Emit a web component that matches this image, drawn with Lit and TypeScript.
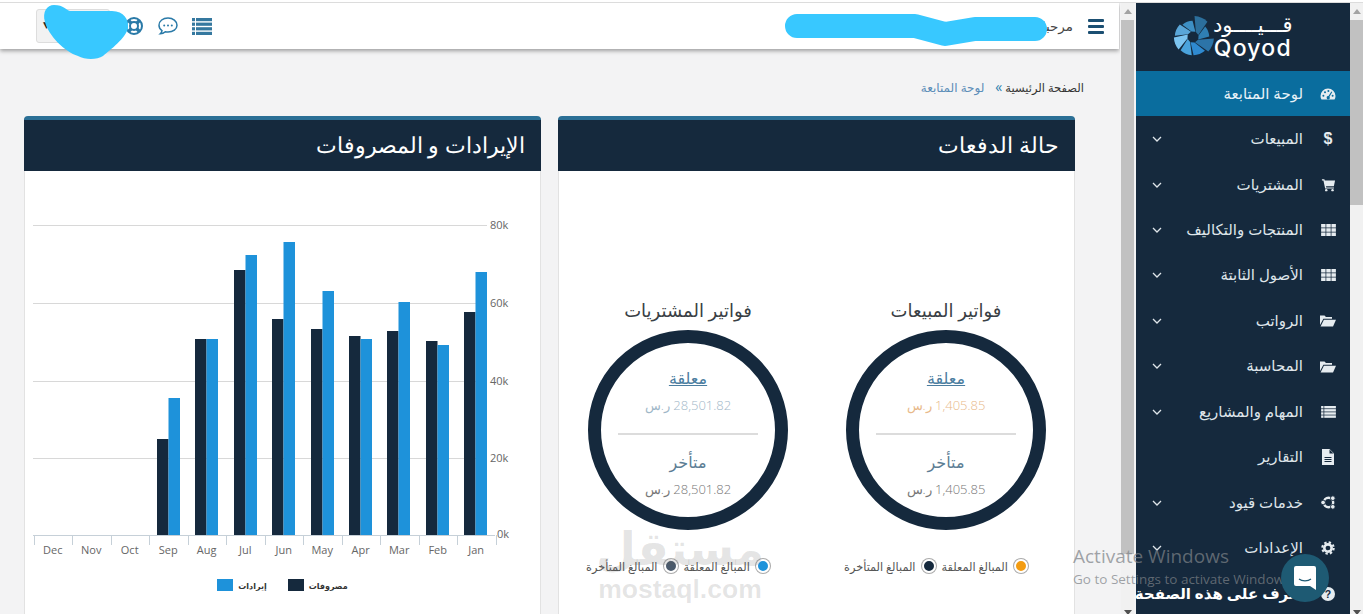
import {LitElement, html, svg, css} from 'lit';
import {customElement} from 'lit/decorators.js';

const NAV = [
  {label: 'لوحة المتابعة', icon: 'gauge', active: true},
  {label: 'المبيعات', icon: 'dollar', more: true},
  {label: 'المشتريات', icon: 'cart', more: true},
  {label: 'المنتجات والتكاليف', icon: 'grid', more: true},
  {label: 'الأصول الثابتة', icon: 'grid', more: true},
  {label: 'الرواتب', icon: 'folder', more: true},
  {label: 'المحاسبة', icon: 'folder', more: true},
  {label: 'المهام والمشاريع', icon: 'list', more: true},
  {label: 'التقارير', icon: 'file'},
  {label: 'خدمات قيود', icon: 'services', more: true},
  {label: 'الإعدادات', icon: 'cog', more: true},
  {label: 'تعرف على هذه الصفحة', icon: 'help', strong: true},
];

// x of the dark bar, top of dark bar, top of blue bar
const BARS = [
  {m: 'Dec', x: 0},
  {m: 'Nov', x: 0},
  {m: 'Oct', x: 0},
  {m: 'Sep', x: 157, d: 439, b: 398},
  {m: 'Aug', x: 195, d: 339, b: 339},
  {m: 'Jul', x: 234, d: 270, b: 255},
  {m: 'Jun', x: 272, d: 319, b: 242},
  {m: 'May', x: 311, d: 329, b: 291},
  {m: 'Apr', x: 349, d: 336, b: 339},
  {m: 'Mar', x: 387, d: 331, b: 302},
  {m: 'Feb', x: 426, d: 341, b: 345},
  {m: 'Jan', x: 464, d: 312, b: 272},
];

const GRID = [
  {y: 225, t: '80k'},
  {y: 303, t: '60k'},
  {y: 381, t: '40k'},
  {y: 458, t: '20k'},
];

const INVOICES = [
  {
    title: 'فواتير المشتريات',
    amount: '28,501.82 ر.س',
    tone: 'blue',
    dots: ['#1e92da', '#4a5a6c'],
  },
  {
    title: 'فواتير المبيعات',
    amount: '1,405.85 ر.س',
    tone: 'orange',
    dots: ['#f39c12', '#15293d'],
  },
];

// logo wheel: colour and outer radius per segment, clockwise from the top right
const WHEEL = [
  ['#2c6f9c', 22],
  ['#2f7fb4', 17],
  ['#2c74a8', 22],
  ['#2f8ad0', 19],
  ['#4aa3dc', 19],
  ['#7cc4f0', 20],
  ['#5aa6d8', 19],
  ['#3d8fc4', 17],
] as const;

function pinwheel() {
  const cx = 22;
  const cy = 22;
  return WHEEL.map(([c, r], i) => {
    const a = (i * Math.PI) / 4 - 1.5;
    const step = Math.PI / 4 - 0.1;
    const p = (rad: number, t: number) => `${(cx + rad * Math.cos(t)).toFixed(1)} ${(cy + rad * Math.sin(t)).toFixed(1)}`;
    return svg`<path d="M${p(6, a + 0.45)} L${p(r, a)} A${r} ${r} 0 0 1 ${p(r, a + step)} L${p(6, a + 0.45 + step)} Z" fill=${c}></path>`;
  });
}

function icon(name: string) {
  switch (name) {
    case 'gauge':
      return html`<svg viewBox="0 0 16 16" width="16" height="16"><path fill="#e6ecf0" d="M8 2.5a7.5 7.5 0 0 0-7.5 7.5c0 1.4.4 2.6 1 3.5h13c.6-.9 1-2.1 1-3.5A7.5 7.5 0 0 0 8 2.5z"></path><g fill="#0a6d9e"><circle cx="3.4" cy="9.8" r="1"></circle><circle cx="5" cy="6.2" r="1"></circle><circle cx="8.4" cy="4.9" r="1"></circle><circle cx="12.6" cy="9.8" r="1"></circle><path d="M11.4 5.6l.9.5-2.8 4.6a1.6 1.6 0 1 1-1-.6z"></path></g></svg>`;
    case 'dollar':
      return html`<span class="dollar">$</span>`;
    case 'cart':
      return html`<svg viewBox="0 0 16 16" width="15" height="15"><path fill="#e6ecf0" d="M1 2.5h2.6l.4 1.3h11l-1.3 6H5.3l.3 1.3h8.2v1.2H4.4L2.6 3.7H1z"></path><circle cx="5.6" cy="14" r="1.3" fill="#e6ecf0"></circle><circle cx="12.3" cy="14" r="1.3" fill="#e6ecf0"></circle></svg>`;
    case 'grid':
      return html`<svg viewBox="0 0 16 13" width="15" height="12" fill="#e6ecf0">${[0, 4.6, 9.2].map(y => [0, 5.6, 11.2].map(x => svg`<rect x=${x} y=${y} width="4.8" height="3.8"></rect>`))}</svg>`;
    case 'folder':
      return html`<svg viewBox="0 0 16 13" width="16" height="13" fill="#e6ecf0"><path d="M0 11V1.5h4.5L6 3h6v1.8H3.4z"></path><path d="M3.9 5.8H16l-3 6.7H0.6z"></path></svg>`;
    case 'list':
      return html`<svg viewBox="0 0 16 13" width="15" height="12" fill="#e6ecf0">${[0, 3.4, 6.8, 10.2].map(y => svg`<rect x="0" y=${y} width="2.6" height="2.6"></rect><rect x="3.4" y=${y} width="12.6" height="2.6"></rect>`)}</svg>`;
    case 'file':
      return html`<svg viewBox="0 0 14 16" width="14" height="16"><path fill="#e6ecf0" d="M1 0h7.5L13 4.5V16H1z"></path><path fill="#15293d" d="M8.5 0.5v4h4zM3.5 8h7v1h-7zM3.5 10h7v1h-7zM3.5 12h7v1h-7z"></path></svg>`;
    case 'services':
      return html`<svg viewBox="0 0 16 16" width="15" height="15"><circle cx="8" cy="8" r="5" fill="none" stroke="#e6ecf0" stroke-width="2.6"></circle><circle cx="12.6" cy="3.4" r="2.5" fill="#e6ecf0" stroke="#15293d"></circle><circle cx="12.6" cy="12.6" r="2.5" fill="#e6ecf0" stroke="#15293d"></circle><circle cx="2.2" cy="8" r="2.5" fill="#e6ecf0" stroke="#15293d"></circle></svg>`;
    case 'cog':
      return html`<svg viewBox="0 0 16 16" width="14" height="14"><circle cx="8" cy="8" r="4.2" fill="none" stroke="#e6ecf0" stroke-width="3"></circle><circle cx="8" cy="8" r="6.5" fill="none" stroke="#e6ecf0" stroke-width="2.4" stroke-dasharray="2.7 2.4"></circle></svg>`;
    case 'help':
      return html`<svg viewBox="0 0 16 16" width="14" height="14"><circle cx="8" cy="8" r="8" fill="#e6ecf0"></circle><text x="8" y="12.4" text-anchor="middle" font-size="12" font-weight="700" font-family="Liberation Sans" fill="#15293d">?</text></svg>`;
    default:
      return html``;
  }
}

@customElement('app-root')
export class AppRoot extends LitElement {
  static styles = css`
    :host {
      display: block;
      position: relative;
      width: 1363px;
      height: 614px;
      overflow: hidden;
      padding-top: 2px;
      box-sizing: border-box;
      background: #fff;
      font-family: 'Open Sans', 'DejaVu Sans', sans-serif;
      color: #333;
    }
    .shell {
      display: flex;
      height: 612px;
      border-top: 1px solid #dcdcdc;
      background: #f3f3f4;
    }
    .main {
      width: 1120px;
      flex: none;
      direction: rtl;
      overflow: hidden;
    }
    .topbar {
      display: flex;
      align-items: center;
      height: 46px;
      width: 1119px;
      margin-left: 0;
      margin-right: 1px;
      padding-right: 15px;
      box-sizing: border-box;
      background: #fff;
      box-shadow: 0 2px 4px rgba(0, 0, 0, 0.35);
    }
    .burger {
      display: flex;
      flex-direction: column;
      gap: 3px;
      width: 16px;
      margin-left: 15px;
    }
    .burger i {
      display: block;
      height: 3px;
      background: #1b4f72;
      border-radius: 1px;
    }
    .hello {
      font-size: 13.5px;
      color: #444;
    }
    .tools {
      margin-right: auto;
      display: flex;
      direction: ltr;
      align-items: center;
      gap: 14px;
      padding-left: 36px;
    }
    .pick {
      width: 74px;
      height: 34px;
      padding: 9px 0 0 6px;
      background: #f2f2f2;
      border: 1px solid #ddd;
      border-radius: 3px;
      box-sizing: border-box;
      font-size: 9px;
      line-height: 12px;
      color: #222;
    }
    .crumbs {
      display: flex;
      align-items: center;
      gap: 3px;
      height: 20px;
      margin: 28px 36px 19px 0;
      font-size: 11.5px;
      color: #333;
    }
    .crumbs b {
      font-weight: 400;
      color: #2f7fae;
      font-size: 14px;
      line-height: 1;
      margin-left: 8px;
    }
    .crumbs span.now {
      color: #5b8db8;
      font-size: 12px;
    }
    .cards {
      display: flex;
      gap: 17px;
      margin-right: 45px;
      margin-left: 24px;
    }
    .card {
      flex: 1;
      min-width: 0;
      height: 520px;
      background: #fff;
      border: 1px solid #e2e2e2;
      border-top: none;
      border-radius: 4px 4px 0 0;
    }
    .card-head {
      height: 55px;
      margin: 0 -1px;
      box-sizing: border-box;
      display: flex;
      align-items: center;
      padding: 0 16px 3px;
      background: #15293d;
      border-top: 4px solid #2b6f95;
      border-radius: 4px 4px 0 0;
      color: #fff;
      font-size: 22px;
      font-weight: 300;
    }
    .invoices {
      display: grid;
      grid-template-columns: 258px 258px;
      direction: ltr;
      padding-top: 127px;
    }
    .invoice {
      display: flex;
      flex-direction: column;
      align-items: center;
      direction: rtl;
    }
    .inv-title {
      height: 24px;
      line-height: 24px;
      font-size: 18px;
      color: #3a3f45;
      margin-bottom: 8px;
    }
    .ring {
      width: 200px;
      height: 200px;
      box-sizing: border-box;
      border: 13px solid #15293d;
      border-radius: 50%;
      display: flex;
      flex-direction: column;
      align-items: center;
      padding-top: 25px;
      font-size: 16px;
      line-height: 20px;
    }
    .ring a {
      color: #4b7d9f;
      text-decoration: underline;
    }
    .ring .late {
      color: #5c7d94;
    }
    .amount {
      margin-top: 7px;
      font-size: 13px;
      font-weight: 300;
      color: #777;
    }
    .amount.orange {
      color: #e8b98a;
    }
    .amount.blue {
      color: #9fb7c8;
    }
    .rule {
      width: 140px;
      height: 2px;
      flex: none;
      margin: 18px 0 17px;
      background: #dcdcdc;
    }
    .inv-legend {
      display: flex;
      align-items: center;
      gap: 6px;
      height: 20px;
      margin-top: 26px;
      margin-right: 20px;
      font-size: 11.3px;
      white-space: nowrap;
      color: #555;
    }
    .dot {
      width: 10px;
      height: 10px;
      border-radius: 50%;
      border: 2px solid #fff;
      box-shadow: 0 0 0 1px #aaa;
    }
    .chart {
      display: block;
      direction: ltr;
    }
    .chart text {
      font-family: 'Open Sans', sans-serif;
      font-size: 11px;
      fill: #666;
    }
    .chart-legend {
      display: flex;
      direction: ltr;
      justify-content: center;
      align-items: center;
      gap: 5px;
      height: 16px;
      margin-top: 12px;
      font-size: 8px;
      font-weight: 700;
      color: #333;
    }
    .swatch {
      width: 16px;
      height: 12px;
    }
    .chart-legend .sep {
      width: 11px;
    }
    .vbar {
      position: relative;
      flex: none;
      width: 13px;
      background: #f1f1f1;
    }
    .vbar.inner {
      margin: 0 2px 0 1px;
    }
    .vbar::before {
      content: '';
      position: absolute;
      left: 3px;
      top: 6px;
      border: 4px solid transparent;
      border-top: 0;
      border-bottom: 5px solid #a3a3a3;
    }
    .vbar::after {
      content: '';
      position: absolute;
      left: 3px;
      bottom: 0;
      border: 4px solid transparent;
      border-bottom: 0;
      border-top: 5px solid #505050;
    }
    .thumb {
      position: absolute;
      left: 0;
      right: 0;
      background: #c1c1c1;
    }
    .side {
      width: 214px;
      flex: none;
      background: #15293d;
      direction: rtl;
      overflow: hidden;
    }
    .logo {
      height: 68px;
      display: flex;
      direction: ltr;
      align-items: center;
      padding-left: 36px;
      gap: 0;
      color: #fff;
    }
    .logo-words {
      display: flex;
      flex-direction: column;
      align-items: center;
      margin-left: -1px;
      line-height: 1;
    }
    .logo-ar {
      font-size: 21px;
      direction: rtl;
      height: 20px;
      line-height: 20px;
      margin-bottom: 3px;
    }
    .logo-en {
      font-family: 'Inter', sans-serif;
      font-size: 23px;
      font-weight: 500;
      letter-spacing: 1.2px;
    }
    .nav {
      display: flex;
      align-items: center;
      height: 45.45px;
      padding: 0 14px 0 16px;
      gap: 17px;
      color: #dfe5ea;
      font-size: 15px;
      white-space: nowrap;
    }
    .nav.active {
      background: #0a6d9e;
      color: #e8f2f8;
    }
    .nav.strong {
      color: #fff;
      font-weight: 700;
    }
    .nav-label {
      margin-bottom: 2px;
    }
    .nav-icon {
      width: 16px;
      flex: none;
      display: flex;
      justify-content: center;
      align-items: center;
    }
    .dollar {
      font-family: 'Liberation Sans', sans-serif;
      font-weight: 700;
      font-size: 16px;
      color: #e6ecf0;
    }
    .chev {
      margin-right: auto;
      display: block;
    }
    .mask {
      position: absolute;
      left: 0;
      top: 0;
      pointer-events: none;
    }
    .mark {
      position: absolute;
      left: 590px;
      top: 520px;
      width: 180px;
      text-align: center;
      color: rgba(90, 90, 90, 0.16);
      pointer-events: none;
    }
    .mark-ar {
      font-size: 46px;
      font-weight: 700;
      line-height: 54px;
    }
    .mark-en {
      font-family: 'Liberation Sans', sans-serif;
      font-size: 26.5px;
      font-weight: 700;
      line-height: 30px;
    }
    .activate {
      position: absolute;
      left: 1073px;
      top: 544px;
      color: rgba(125, 130, 135, 0.72);
      font-family: 'Open Sans', sans-serif;
      pointer-events: none;
    }
    .activate div:first-child {
      font-size: 19px;
      line-height: 25px;
    }
    .activate div:last-child {
      font-size: 13.5px;
      line-height: 20px;
    }
    .chat {
      position: absolute;
      left: 1281px;
      top: 554px;
      width: 48px;
      height: 48px;
      border-radius: 50%;
      background: #1e5a73;
      display: flex;
      align-items: center;
      justify-content: center;
    }
  `;

  private chevron() {
    return html`<svg class="chev" viewBox="0 0 10 6" width="10" height="6"><polyline points="1,1 5,5 9,1" fill="none" stroke="#dfe5ea" stroke-width="1.3"></polyline></svg>`;
  }

  private renderChart() {
    const base = 535;
    const top = 171;
    return html`<svg class="chart" width="515" height="394" viewBox="25 ${top} 515 394">
      ${GRID.map(g => svg`
        <line x1="33" x2="487" y1=${g.y + 0.5} y2=${g.y + 0.5} stroke="#d8d8d8"></line>
        <text x="490" y=${g.y + 4}>${g.t}</text>`)}
      <text x="497" y=${base + 3}>0k</text>
      ${BARS.filter(b => b.d).map(b => svg`
        <rect x=${b.x} y=${b.d} width="11.5" height=${base - (b.d as number)} fill="#15293d"></rect>
        <rect x=${b.x + 11.5} y=${b.b} width="11.5" height=${base - (b.b as number)} fill="#1e92da"></rect>`)}
      <line x1="33" x2="495" y1=${base + 0.5} y2=${base + 0.5} stroke="#c6d0d8"></line>
      ${Array.from({length: 13}, (_, i) => {
        const x = Math.round(33.5 + i * 38.5) + 0.5;
        return svg`<line x1=${x} x2=${x} y1=${base} y2=${base + 10} stroke="#c6d0d8"></line>`;
      })}
      ${BARS.map((b, i) => svg`<text x=${52.7 + i * 38.5} y="554" text-anchor="middle">${b.m}</text>`)}
    </svg>`;
  }

  private renderInvoice(inv: (typeof INVOICES)[number]) {
    return html`<div class="invoice">
      <div class="inv-title">${inv.title}</div>
      <div class="ring">
        <a>معلقة</a>
        <div class="amount ${inv.tone}">${inv.amount}</div>
        <div class="rule"></div>
        <div class="late">متأخر</div>
        <div class="amount">${inv.amount}</div>
      </div>
      <div class="inv-legend">
        <span class="dot" style="background:${inv.dots[0]}"></span>
        <span>المبالغ المعلقة</span>
        <span class="dot" style="background:${inv.dots[1]}"></span>
        <span>المبالغ المتأخرة</span>
      </div>
    </div>`;
  }

  render() {
    return html`<div class="shell">
        <div class="main">
          <div class="topbar">
            <div class="burger"><i></i><i></i><i></i></div>
            <span class="hello">مرحبا</span>
            <div class="tools">
              <div class="pick">▼</div>
              <svg viewBox="0 0 20 20" width="20" height="20">
                <circle cx="10" cy="10" r="8" fill="none" stroke="#2a7aa8" stroke-width="2"></circle>
                <circle cx="10" cy="10" r="4" fill="none" stroke="#2a7aa8" stroke-width="2"></circle>
                <path d="M4.5 4.5l3 3M15.5 4.5l-3 3M4.5 15.5l3-3M15.5 15.5l-3-3" stroke="#2a7aa8" stroke-width="3.4"></path>
              </svg>
              <svg viewBox="0 0 20 20" width="20" height="20">
                <path d="M10 2c-5 0-9 3-9 7.2 0 2.3 1.2 4.2 3 5.4-.2 1.3-1 2.6-1.7 3.2 2 0 3.8-.9 5-2 .9.2 1.8.3 2.7.3 5 0 9-3 9-6.9S15 2 10 2z" fill="none" stroke="#2a7aa8" stroke-width="1.5"></path>
                <circle cx="6.2" cy="9.4" r="1" fill="#2a7aa8"></circle>
                <circle cx="10" cy="9.4" r="1" fill="#2a7aa8"></circle>
                <circle cx="13.8" cy="9.4" r="1" fill="#2a7aa8"></circle>
              </svg>
              <svg viewBox="0 0 20 17" width="20" height="17" fill="#35789f">
                ${[0, 4.6, 9.2, 13.8].map(y => svg`<rect x="0" y=${y} width="3" height="3.2"></rect><rect x="4" y=${y} width="16" height="3.2"></rect>`)}
              </svg>
            </div>
          </div>
          <div class="crumbs">
            <span>الصفحة الرئيسية</span><b>»</b>
            <span class="now">لوحة المتابعة</span>
          </div>
          <div class="cards">
            <section class="card">
              <div class="card-head">حالة الدفعات</div>
              <div class="invoices">${INVOICES.map(i => this.renderInvoice(i))}</div>
            </section>
            <section class="card">
              <div class="card-head">الإيرادات و المصروفات</div>
              ${this.renderChart()}
              <div class="chart-legend">
                <span class="swatch" style="background:#1e92da"></span>
                <span>إيرادات</span>
                <span class="sep"></span>
                <span class="swatch" style="background:#15293d"></span>
                <span>مصروفات</span>
              </div>
            </section>
          </div>
        </div>
        <div class="vbar inner"><div class="thumb" style="top:17px;height:534px"></div></div>
        <aside class="side">
          <div class="logo">
            <svg viewBox="0 0 44 44" width="42" height="42">${pinwheel()}</svg>
            <div class="logo-words">
              <span class="logo-ar">قـــيــــود</span>
              <span class="logo-en">Qoyod</span>
            </div>
          </div>
          ${NAV.map(n => html`<div class="nav ${n.active ? 'active' : ''} ${n.strong ? 'strong' : ''}">
            <span class="nav-icon">${icon(n.icon)}</span>
            <span class="nav-label">${n.label}</span>
            ${n.more ? this.chevron() : ''}
          </div>`)}
        </aside>
        <div class="vbar"><div class="thumb" style="top:17px;height:185px"></div></div>
      </div>
      <svg class="mask" width="1363" height="614" fill="#38c8ff">
        <path d="M54 5C64 5 66 10 70 11L112 11C124 11 129 20 128 28C126 38 110 50 103 56C97 60 85 60 78 56C65 52 48 35 45 22C42 12 47 5 54 5Z"></path>
        <path d="M797 26L915 26L945 34L975 29L1035 29" fill="none" stroke="#38c8ff" stroke-width="24" stroke-linecap="round" stroke-linejoin="round"></path>
      </svg>
      <div class="mark">
        <div class="mark-ar">مستقل</div>
        <div class="mark-en">mostaql.com</div>
      </div>
      <div class="activate">
        <div>Activate Windows</div>
        <div>Go to Settings to activate Windows.</div>
      </div>
      <div class="chat">
        <svg viewBox="0 0 22 24" width="22" height="24">
          <path d="M2 0h18a2 2 0 0 1 2 2v22l-6-4H2a2 2 0 0 1-2-2V2a2 2 0 0 1 2-2z" fill="#fff"></path>
          <path d="M5 13c3 2.4 9 2.4 12 0" fill="none" stroke="#1e5a73" stroke-width="1.2"></path>
        </svg>
      </div>`;
  }
}
